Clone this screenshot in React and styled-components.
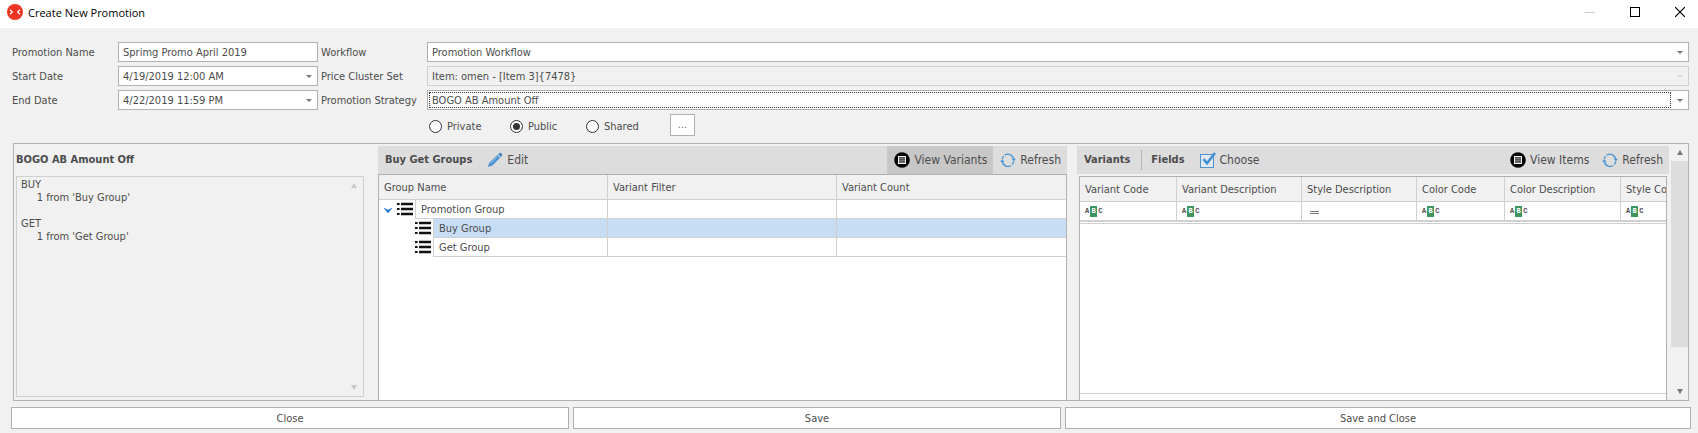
import React from 'react';
import styled, { createGlobalStyle, css } from 'styled-components';

const GlobalStyle = createGlobalStyle`
  * { box-sizing: border-box; }
  body { margin: 0; }
  body, button, input, select, textarea {
    font-family: "DejaVu Sans Condensed", "DejaVu Sans", sans-serif;
    font-size: 11px;
    color: #4c4c4c;
  }
  button { border: 0; padding: 0; background: none; }
`;

const line = '#b0b0b0';
const softLine = '#d0d0d0';
const surface = '#f1f1f1';

const Window = styled.div`
  display: flex;
  flex-direction: column;
  min-height: 100vh;
  background: ${surface};
`;

const TitleBar = styled.header`
  display: flex;
  align-items: flex-start;
  height: 28px;
  padding-left: 7px;
  background: #fff;
`;

const LogoSlot = styled.span`
  display: flex;
  padding-top: 4px;
`;

const Title = styled.h1`
  flex: 1;
  margin: 0 0 0 5px;
  font: 400 11px/26px "Open Sans", "Noto Sans", sans-serif;
  color: #000;
`;

const WindowButton = styled.button`
  display: flex;
  justify-content: flex-end;
  align-items: center;
  width: 45px;
  height: 24px;
  padding-right: 13px;
`;

const WindowButtons = styled.div`
  display: flex;
`;

const Form = styled.form`
  display: grid;
  grid-template-columns: 106px 200px 109px minmax(0, 1fr);
  grid-auto-rows: 20px;
  row-gap: 4px;
  padding: 14px 9px 0 12px;
`;

const Label = styled.label`
  line-height: 22px;
  padding-left: ${(p) => (p.$second ? 3 : 0)}px;
  white-space: nowrap;
`;

const Field = styled.div`
  display: grid;
  grid-template-columns: minmax(0, 1fr) 17px;
  grid-template-rows: 18px;
  border: 1px solid ${(p) => (p.$disabled ? softLine : line)};
  background: ${(p) => (p.$disabled ? surface : '#fff')};
`;

const control = css`
  grid-row: 1;
  grid-column: 1 / 3;
  width: 100%;
  margin: 0;
  border: 0;
  padding: 0 4px;
  outline: 0;
  background: transparent;
  color: inherit;
  opacity: 1;
`;

const TextInput = styled.input`
  ${control}
`;

const Select = styled.select`
  ${control}
  appearance: none;
`;

const FocusFrame = styled.span`
  grid-row: 1;
  grid-column: 1;
  margin: 1px 0 1px 1px;
  border: 1px dotted #333;
  pointer-events: none;
`;

const ArrowSlot = styled.span`
  display: flex;
  grid-row: 1;
  grid-column: 2;
  justify-content: center;
  align-items: center;
  pointer-events: none;
`;

const Visibility = styled.div`
  display: flex;
  align-items: center;
  height: 33px;
  padding-left: 429px;
`;

const RadioLabel = styled.label`
  display: flex;
  align-items: center;
  gap: 5px;
  width: ${(p) => p.$width}px;
`;

const Radio = styled.input`
  display: grid;
  place-items: center;
  appearance: none;
  width: 13px;
  height: 13px;
  margin: 0;
  border: 1px solid #333;
  border-radius: 50%;
  background: #fff;
  &:checked::before {
    content: "";
    width: 7px;
    height: 7px;
    border-radius: 50%;
    background: #333;
  }
`;

const MoreButton = styled.button`
  width: 25px;
  height: 22px;
  margin-bottom: 4px;
  border: 1px solid ${line};
  background: #fff;
  color: #777;
`;

const Workspace = styled.main`
  display: grid;
  flex: 1;
  grid-template-columns: 348px minmax(0, 689fr) minmax(0, 592fr) 17px;
  min-height: 258px;
  margin: 0 9px 0 13px;
  border: 1px solid ${line};
  padding-left: 2px;
`;

const Summary = styled.section`
  display: flex;
  flex-direction: column;
  padding-bottom: 3px;
`;

const SummaryTitle = styled.h2`
  margin: 0;
  font-size: 11px;
  line-height: 32px;
`;

const Memo = styled.div`
  display: flex;
  flex: 1;
  border: 1px solid ${softLine};
`;

const MemoText = styled.textarea`
  flex: 1;
  margin: 0;
  border: 0;
  padding: 1px 4px;
  resize: none;
  outline: 0;
  overflow: hidden;
  background: transparent;
  line-height: 13px;
`;

const MemoScroll = styled.div`
  display: flex;
  flex-direction: column;
  justify-content: space-between;
  width: 18px;
`;

const StepButton = styled.button`
  display: flex;
  justify-content: center;
  align-items: center;
  width: 100%;
  height: 17px;
`;

const GroupsPanel = styled.section`
  display: flex;
  flex-direction: column;
  margin: 2px 0 0 14px;
`;

const VariantsPanel = styled.section`
  display: flex;
  flex-direction: column;
  min-width: 0;
  margin: 2px 2px 0 10px;
`;

const Toolbar = styled.div`
  display: flex;
  align-items: center;
  height: 28px;
  padding-left: 7px;
  background: #ddd;
`;

const ToolbarTitle = styled.h2`
  margin: 0;
  font-size: 11px;
  line-height: 28px;
  white-space: nowrap;
`;

const Divider = styled.span`
  width: 1px;
  height: 20px;
  margin: 0 9px 0 11px;
  background: #b8b8b8;
`;

const Spacer = styled.span`
  flex: 1;
`;

const ToolButton = styled.button`
  display: flex;
  align-items: center;
  gap: 4px;
  height: 28px;
  padding: 0 6px 0 7px;
  background: ${(p) => (p.$active ? '#c7c7c7' : 'transparent')};
  font-size: 12px;
  white-space: nowrap;
`;

const LeadTools = styled.div`
  display: flex;
  margin-left: 8px;
`;

const GridFrame = styled.div`
  flex: 1;
  min-width: 0;
  margin: ${(p) => (p.$inset ? '2px 2px 0 2px' : '0')};
  border: 1px solid ${line};
  border-bottom: 0;
  overflow: hidden;
  background: #fff;
`;

const Table = styled.table`
  width: ${(p) => (p.$wide ? '641px' : '100%')};
  border-collapse: separate;
  border-spacing: 0;
  table-layout: fixed;
`;

const HeadCell = styled.th`
  width: ${(p) => (p.$width ? `${p.$width}px` : 'auto')};
  height: 25px;
  border-right: 1px solid ${softLine};
  border-bottom: 1px solid ${softLine};
  padding: 0 5px;
  background: ${surface};
  font-weight: 400;
  text-align: left;
  white-space: nowrap;
  &:last-child { border-right-color: ${surface}; }
`;

const GroupRow = styled.tr`
  --fill: ${(p) => (p.$selected ? '#c7ddf4' : '#fff')};
`;

const GroupCell = styled.td`
  height: 19px;
  border-right: 1px solid ${softLine};
  border-bottom: 1px solid ${softLine};
  padding: 0;
  background: var(--fill);
  &:last-child { border-right: 0; }
`;

const NameCell = styled(GroupCell)`
  border-bottom: 0;
  background: #fff;
`;

const TreeNode = styled.div`
  display: flex;
  height: 19px;
  padding-left: ${(p) => p.$level * 18}px;
`;

const Toggle = styled.button`
  display: flex;
  justify-content: center;
  align-items: center;
  width: 18px;
  height: 20px;
`;

const ToggleGap = styled.span`
  width: 18px;
`;

const NodeIcon = styled.span`
  display: flex;
  align-items: center;
  width: 18px;
  height: 18px;
`;

const NodeName = styled.span`
  flex: 1;
  border-left: 1px solid ${softLine};
  border-bottom: 1px solid ${softLine};
  padding-left: 5px;
  background: var(--fill);
  line-height: 20px;
`;

const FilterCell = styled.td`
  height: 20px;
  border-right: 1px solid ${softLine};
  border-bottom: 2px solid ${softLine};
  padding: 0 5px;
`;

const TextFilter = styled.span`
  display: flex;
  align-items: center;
  gap: 1px;
  font: 700 7px/11px "Liberation Mono", monospace;
`;

const FilterKey = styled.span`
  width: 7px;
  height: 11px;
  background: #3c955e;
  color: #fff;
  text-align: center;
`;

const GridBody = styled.div`
  height: 171px;
  margin-top: 1px;
  border-top: 1px solid ${softLine};
  border-bottom: 1px solid ${softLine};
`;

const VariantsViewport = styled.div`
  display: flex;
  flex: 1;
  flex-direction: column;
  min-width: 0;
`;

const Scrollbar = styled.div`
  display: flex;
  flex-direction: column;
`;

const Track = styled.div`
  flex: 1;
`;

const Thumb = styled.div`
  height: 84%;
  background: #ddd;
`;

const Footer = styled.footer`
  display: grid;
  grid-template-columns: 558fr 488fr 626fr;
  gap: 4px;
  padding: 6px 7px 4px 11px;
`;

const FooterButton = styled.button`
  height: 22px;
  border: 1px solid ${line};
  background: #fff;
`;

const Logo = () => (
  <svg width="16" height="16" viewBox="0 0 16 16" aria-hidden="true">
    <circle cx="8" cy="8" r="8" fill="#ee3524" />
    <path d="M3 5.8L5.3 8L3 10.2M13 5.8L10.7 8L13 10.2" fill="none" stroke="#fff" strokeWidth="1.2" />
  </svg>
);

const DropArrow = ({ color = '#777' }) => (
  <svg width="6" height="3" viewBox="0 0 6 3" aria-hidden="true">
    <path d="M0 0H6L3 3Z" fill={color} />
  </svg>
);

const StepArrow = ({ up, color = '#777' }) => (
  <svg width="6" height="5" viewBox="0 0 6 5" aria-hidden="true">
    <path d={up ? 'M0 5L3 0L6 5Z' : 'M0 0H6L3 5Z'} fill={color} />
  </svg>
);

const PencilIcon = () => (
  <svg width="16" height="16" viewBox="0 0 16 16" aria-hidden="true">
    <path d="M1 15L2.2 10.8L10.4 3L13.1 5.7L5.1 13.7Z" fill="#4b93d1" />
    <path d="M11.2 2.2L12.6 1C13.6 .3 15.7 2.3 15 3.4L13.9 4.9Z" fill="#3b82c4" />
    <path d="M3.4 11.4L10.6 4.4" stroke="#a9cdec" strokeWidth=".9" />
  </svg>
);

const DisplayIcon = () => (
  <svg width="16" height="16" viewBox="0 0 16 16" aria-hidden="true">
    <circle cx="8" cy="8" r="7.8" fill="#000" />
    <rect x="4.5" y="4.5" width="7" height="7" fill="#555" stroke="#eee" />
    <path d="M5 6.5H11M5 8.5H11M5 10.5H11" stroke="#999" strokeWidth=".5" />
  </svg>
);

const RefreshIcon = () => (
  <svg width="16" height="16" viewBox="0 0 16 16" aria-hidden="true">
    <g fill="none" stroke="#4f97d2" strokeWidth="1.4">
      <path d="M4.6 3.1A6 6 0 0 1 13.8 7.6" />
      <path d="M11.4 13.5A6 6 0 0 1 2.2 8.9" />
      <path d="M2.3 7.2A6 6 0 0 1 3.6 4.1M13.7 9.4A6 6 0 0 1 12.4 12.5" />
    </g>
    <path d="M11.5 6.8H16L13.8 9.3ZM0 9.7H4.5L2.2 7.2Z" fill="#4f97d2" />
  </svg>
);

const CheckIcon = () => (
  <svg width="16" height="16" viewBox="0 0 16 16" aria-hidden="true">
    <rect x=".5" y="2.5" width="13" height="13" fill="#e4e8ec" stroke="#4b93d1" />
    <path d="M3.4 7.2L7 11.2L15 1" fill="none" stroke="#3f8fd4" strokeWidth="2.5" />
  </svg>
);

const ListIcon = () => (
  <svg width="16" height="14" viewBox="0 0 16 14" aria-hidden="true">
    <path d="M4 2H16M4 7H16M4 12H16" stroke="#111" strokeWidth="2.4" />
    <path d="M0 2H2.6M0 7H2.6M0 12H2.6" stroke="#111" strokeWidth="2.2" />
  </svg>
);

const ExpandIcon = () => (
  <svg width="8" height="5" viewBox="0 0 8 5" aria-hidden="true">
    <path d="M0 0L4 2L8 0L4 5Z" fill="#1f73d0" stroke="#1f73d0" strokeWidth=".4" />
  </svg>
);

const EqualsIcon = () => (
  <svg width="16" height="4" viewBox="0 0 16 4" aria-label="Equals">
    <path d="M3 .5H12M3 2.5H12" stroke="#777" />
  </svg>
);

const ContainsFilter = () => (
  <TextFilter>A<FilterKey>B</FilterKey>C</TextFilter>
);

function Combo({ id, value, disabled, focused }) {
  return (
    <Field $disabled={disabled}>
      <Select id={id} defaultValue={value} disabled={disabled}>
        <option>{value}</option>
      </Select>
      {focused && <FocusFrame />}
      <ArrowSlot><DropArrow color={disabled ? '#d8d8d8' : undefined} /></ArrowSlot>
    </Field>
  );
}

const groups = [
  { name: 'Promotion Group', level: 0 },
  { name: 'Buy Group', level: 1, selected: true },
  { name: 'Get Group', level: 1 },
];

const variantColumns = [
  { name: 'Variant Code', width: 97 },
  { name: 'Variant Description', width: 125 },
  { name: 'Style Description', width: 115, equals: true },
  { name: 'Color Code', width: 88 },
  { name: 'Color Description', width: 116 },
  { name: 'Style Code', width: 100 },
];

const summaryText = `BUY
     1 from 'Buy Group'

GET
     1 from 'Get Group'`;

export default function App() {
  return (
    <Window>
      <GlobalStyle />
      <TitleBar>
        <LogoSlot><Logo /></LogoSlot>
        <Title>Create New Promotion</Title>
        <WindowButtons>
          <WindowButton aria-label="Minimize" disabled>
            <svg width="10" height="10"><path d="M0 5.5H10" stroke="#ccc" /></svg>
          </WindowButton>
          <WindowButton aria-label="Maximize">
            <svg width="10" height="10"><rect x=".5" y=".5" width="9" height="9" fill="none" stroke="#000" /></svg>
          </WindowButton>
          <WindowButton aria-label="Close window">
            <svg width="10" height="10"><path d="M0 0L10 10M10 0L0 10" stroke="#000" strokeWidth="1.2" /></svg>
          </WindowButton>
        </WindowButtons>
      </TitleBar>

      <Form onSubmit={(e) => e.preventDefault()}>
        <Label htmlFor="name">Promotion Name</Label>
        <Field><TextInput id="name" defaultValue="Sprimg Promo April 2019" /></Field>
        <Label htmlFor="workflow" $second>Workflow</Label>
        <Combo id="workflow" value="Promotion Workflow" />
        <Label htmlFor="start">Start Date</Label>
        <Combo id="start" value="4/19/2019 12:00 AM" />
        <Label htmlFor="cluster" $second>Price Cluster Set</Label>
        <Combo id="cluster" value="Item: omen - [Item 3]{7478}" disabled />
        <Label htmlFor="end">End Date</Label>
        <Combo id="end" value="4/22/2019 11:59 PM" />
        <Label htmlFor="strategy" $second>Promotion Strategy</Label>
        <Combo id="strategy" value="BOGO AB Amount Off" focused />
      </Form>

      <Visibility role="radiogroup" aria-label="Visibility">
        <RadioLabel $width={81}><Radio type="radio" name="visibility" />Private</RadioLabel>
        <RadioLabel $width={76}><Radio type="radio" name="visibility" defaultChecked />Public</RadioLabel>
        <RadioLabel $width={84}><Radio type="radio" name="visibility" />Shared</RadioLabel>
        <MoreButton type="button">...</MoreButton>
      </Visibility>

      <Workspace>
        <Summary>
          <SummaryTitle>BOGO AB Amount Off</SummaryTitle>
          <Memo>
            <MemoText readOnly aria-label="Strategy summary" defaultValue={summaryText} />
            <MemoScroll>
              <StepButton aria-label="Scroll summary up"><StepArrow up color="#c8c8c8" /></StepButton>
              <StepButton aria-label="Scroll summary down"><StepArrow color="#c8c8c8" /></StepButton>
            </MemoScroll>
          </Memo>
        </Summary>

        <GroupsPanel>
          <Toolbar>
            <ToolbarTitle>Buy Get Groups</ToolbarTitle>
            <LeadTools><ToolButton><PencilIcon />Edit</ToolButton></LeadTools>
            <Spacer />
            <ToolButton $active><DisplayIcon />View Variants</ToolButton>
            <ToolButton><RefreshIcon />Refresh</ToolButton>
          </Toolbar>
          <GridFrame>
            <Table>
              <thead>
                <tr>
                  <HeadCell>Group Name</HeadCell>
                  <HeadCell>Variant Filter</HeadCell>
                  <HeadCell>Variant Count</HeadCell>
                </tr>
              </thead>
              <tbody>
                {groups.map((g) => (
                  <GroupRow key={g.name} $selected={g.selected}>
                    <NameCell>
                      <TreeNode $level={g.level}>
                        {g.level === 0
                          ? <Toggle aria-label="Collapse group"><ExpandIcon /></Toggle>
                          : <ToggleGap />}
                        <NodeIcon><ListIcon /></NodeIcon>
                        <NodeName>{g.name}</NodeName>
                      </TreeNode>
                    </NameCell>
                    <GroupCell />
                    <GroupCell />
                  </GroupRow>
                ))}
              </tbody>
            </Table>
          </GridFrame>
        </GroupsPanel>

        <VariantsPanel>
          <Toolbar>
            <ToolbarTitle>Variants</ToolbarTitle>
            <Divider />
            <ToolbarTitle>Fields</ToolbarTitle>
            <LeadTools><ToolButton><CheckIcon />Choose</ToolButton></LeadTools>
            <Spacer />
            <ToolButton><DisplayIcon />View Items</ToolButton>
            <ToolButton><RefreshIcon />Refresh</ToolButton>
          </Toolbar>
          <VariantsViewport>
            <GridFrame $inset>
              <Table $wide>
                <thead>
                  <tr>
                    {variantColumns.map((c) => (
                      <HeadCell key={c.name} $width={c.width}>{c.name}</HeadCell>
                    ))}
                  </tr>
                </thead>
                <tbody>
                  <tr>
                    {variantColumns.map((c) => (
                      <FilterCell key={c.name}>
                        {c.equals ? <EqualsIcon /> : <ContainsFilter />}
                      </FilterCell>
                    ))}
                  </tr>
                </tbody>
              </Table>
              <GridBody />
            </GridFrame>
          </VariantsViewport>
        </VariantsPanel>

        <Scrollbar>
          <StepButton aria-label="Scroll up"><StepArrow up /></StepButton>
          <Track><Thumb /></Track>
          <StepButton aria-label="Scroll down"><StepArrow /></StepButton>
        </Scrollbar>
      </Workspace>

      <Footer>
        <FooterButton>Close</FooterButton>
        <FooterButton>Save</FooterButton>
        <FooterButton>Save and Close</FooterButton>
      </Footer>
    </Window>
  );
}
